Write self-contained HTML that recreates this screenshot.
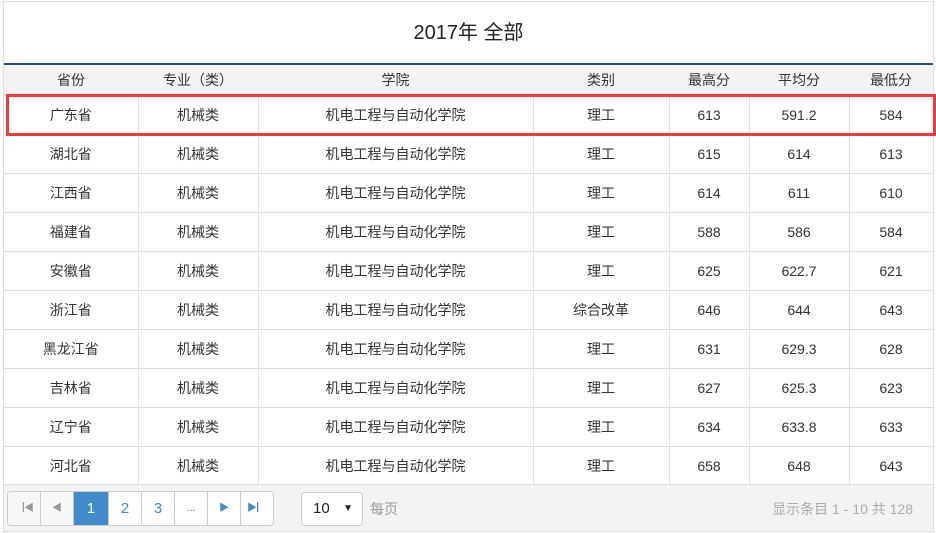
<!DOCTYPE html>
<html><head><meta charset="utf-8"><style>
body{margin:0;background:#fff;font-family:"Liberation Sans","Noto Sans CJK SC",sans-serif;color:#333;font-size:14px}
.wrap{position:absolute;left:3px;top:1px;width:929px;height:529px;border:1px solid #ddd;overflow:hidden}
.title{height:61px;line-height:63px;text-align:center;font-size:20px;color:#222;border-bottom:2px solid #1f4e8c}
table{border-collapse:collapse;width:929px;table-layout:fixed}
th{background:#f3f3f3;font-weight:normal;height:30px;font-size:14px;padding:0}
td{height:38px;border:1px solid #ddd;text-align:center;padding:0}
tr td:first-child{border-left:none}
.foot{position:absolute;left:0;top:482px;width:929px;height:47px;background:#f3f3f3;border-top:1px solid #ddd}
.pg{position:absolute;left:3px;top:6px;display:flex;border:1px solid #ccc;border-radius:4px;overflow:hidden;background:#fff}
.pg div{width:32px;height:33px;line-height:33px;text-align:center;border-right:1px solid #ccc;color:#428bca;font-size:15px}
.pg div:last-child{border-right:none}
.pg .a{background:#428bca;color:#fff;width:34px}
.pg .d{background:#f7f7f7;color:#999;font-size:10px}
.sel{position:absolute;left:297px;top:7px;width:60px;height:32px;border:1px solid #ccc;border-radius:4px;background:#fff;line-height:32px;font-size:15px;color:#222}
.red{position:absolute;left:6px;top:94px;width:924px;height:36px;border:3px solid #f03a3e}
</style></head><body>
<div class="wrap">
<div class="title">2017年 全部</div>
<table>
<colgroup><col style="width:134px"><col style="width:120px"><col style="width:275px"><col style="width:136px"><col style="width:80px"><col style="width:100px"><col style="width:84px"></colgroup>
<tr><th>省份</th><th>专业（类）</th><th>学院</th><th>类别</th><th>最高分</th><th>平均分</th><th>最低分</th></tr>
<tr><td>广东省</td><td>机械类</td><td>机电工程与自动化学院</td><td>理工</td><td>613</td><td>591.2</td><td>584</td></tr>
<tr><td>湖北省</td><td>机械类</td><td>机电工程与自动化学院</td><td>理工</td><td>615</td><td>614</td><td>613</td></tr>
<tr><td>江西省</td><td>机械类</td><td>机电工程与自动化学院</td><td>理工</td><td>614</td><td>611</td><td>610</td></tr>
<tr><td>福建省</td><td>机械类</td><td>机电工程与自动化学院</td><td>理工</td><td>588</td><td>586</td><td>584</td></tr>
<tr><td>安徽省</td><td>机械类</td><td>机电工程与自动化学院</td><td>理工</td><td>625</td><td>622.7</td><td>621</td></tr>
<tr><td>浙江省</td><td>机械类</td><td>机电工程与自动化学院</td><td>综合改革</td><td>646</td><td>644</td><td>643</td></tr>
<tr><td>黑龙江省</td><td>机械类</td><td>机电工程与自动化学院</td><td>理工</td><td>631</td><td>629.3</td><td>628</td></tr>
<tr><td>吉林省</td><td>机械类</td><td>机电工程与自动化学院</td><td>理工</td><td>627</td><td>625.3</td><td>623</td></tr>
<tr><td>辽宁省</td><td>机械类</td><td>机电工程与自动化学院</td><td>理工</td><td>634</td><td>633.8</td><td>633</td></tr>
<tr><td>河北省</td><td>机械类</td><td>机电工程与自动化学院</td><td>理工</td><td>658</td><td>648</td><td>643</td></tr>
</table>
<div class="foot">
<div class="pg"><div class="d">▕◀</div><div class="d">◀</div><div class="a">1</div><div>2</div><div>3</div><div style="font-size:11px">...</div><div style="font-size:10px">▶</div><div style="font-size:10px">▶▏</div></div>
<div class="sel"><span style="margin-left:11px">10</span><span style="position:absolute;right:9px;font-size:10px">▼</span></div>
<div style="position:absolute;left:366px;top:14px;color:#999">每页</div>
<div style="position:absolute;right:20px;top:14px;color:#aaa">显示条目 1 - 10 共 128</div>
</div>
</div>
<div class="red"></div>
</body></html>
